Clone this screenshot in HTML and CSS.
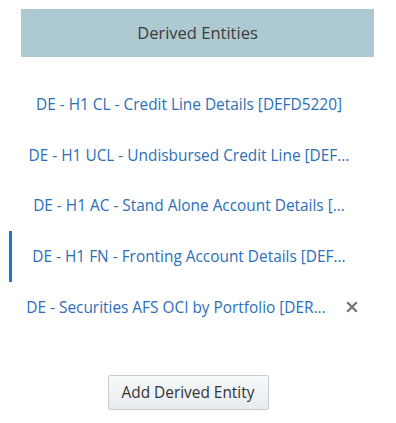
FILE: index.html
```html
<!DOCTYPE html>
<html lang="en">
<head>
    <meta charset="UTF-8">
    <meta name="viewport" content="width=device-width, initial-scale=1.0">
    <title>Derived Entities</title>
    <link rel="stylesheet" href="styles.css">
</head>
<body>
    <div class="panel">
        <div class="panel-header">Derived Entities</div>

        <ul class="entity-list">
            <li class="entity-item"><span class="entity-name">DE - H1 CL - Credit Line Details [DEFD5220]</span></li>
            <li class="entity-item"><span class="entity-name">DE - H1 UCL - Undisbursed Credit Line [DEF...</span></li>
            <li class="entity-item"><span class="entity-name">DE - H1 AC - Stand Alone Account Details [...</span></li>
            <li class="entity-item selected"><span class="entity-name">DE - H1 FN - Fronting Account Details [DEF...</span></li>
            <li class="entity-item hover">
                <span class="entity-name">DE - Securities AFS OCI by Portfolio [DER...</span>
                <button class="remove-btn" title="Remove">
                    <svg width="12" height="12" viewBox="0 0 12 12">
                        <path d="M2 2 L10 10 M10 2 L2 10" stroke="#707070" stroke-width="2.2" stroke-linecap="square"/>
                    </svg>
                </button>
            </li>
        </ul>

        <div class="actions">
            <button class="add-btn">Add Derived Entity</button>
        </div>
    </div>
</body>
</html>
```

FILE: styles.css
```css
:root {
    --header-bg: #adc9d1;
    --header-text: #3c3c3c;
    --link-color: #2b6fb8;
    --accent: #1f77c8;
    --btn-border: #c5ccd3;
}

body {
    margin: 0;
    background-color: #ffffff;
    font-family: 'Open Sans', 'Noto Sans', sans-serif;
}

.panel {
    width: 396px;
    padding-top: 9px;
}

.panel-header {
    margin: 0 22px 0 21px;
    height: 48px;
    line-height: 48px;
    background-color: var(--header-bg);
    color: var(--header-text);
    text-align: center;
    font-size: 16.5px;
}

.entity-list {
    list-style: none;
    margin: 22px 0 0 0;
    padding: 0;
}

.entity-item {
    display: flex;
    align-items: center;
    justify-content: center;
    height: 50.75px;
    margin-left: 9px;
    padding-right: 30px;
    border-left: 3px solid transparent;
    color: var(--link-color);
    font-size: 15.4px;
    white-space: nowrap;
}

.entity-item.selected {
    border-left-color: var(--accent);
}

.entity-item.hover {
    padding-right: 24px;
}

.remove-btn {
    display: flex;
    align-items: center;
    margin-left: 20px;
    padding: 0;
    background: none;
    border: none;
    cursor: pointer;
}

.actions {
    display: flex;
    justify-content: center;
    margin-top: 42px;
    padding-right: 20px;
}

.add-btn {
    width: 161px;
    height: 35px;
    background: linear-gradient(#f7f9fa, #e7ecef);
    border: 1px solid var(--btn-border);
    border-radius: 2px;
    color: #333333;
    font-family: 'Open Sans', 'Noto Sans', sans-serif;
    font-size: 15.4px;
    cursor: pointer;
}
```
